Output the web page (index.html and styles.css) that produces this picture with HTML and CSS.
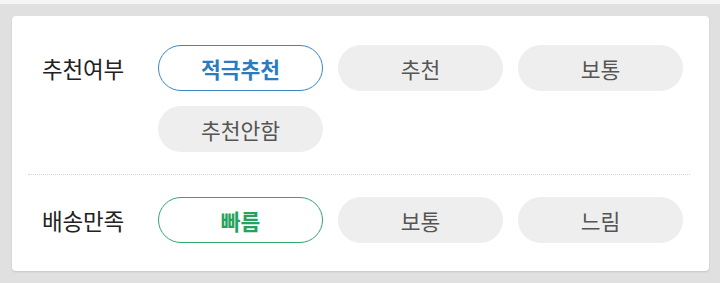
FILE: index.html
```html
<!DOCTYPE html>
<html lang="ko">
<head>
<meta charset="utf-8">
<link rel="stylesheet" href="styles.css">
</head>
<body>
<div class="topbar"></div>
<div class="page">
  <div class="card">
    <div class="section first">
      <div class="label">추천여부</div>
      <div class="options">
        <button class="opt active-blue">적극추천</button>
        <button class="opt">추천</button>
        <button class="opt">보통</button>
        <button class="opt">추천안함</button>
      </div>
    </div>
    <div class="section second">
      <div class="label">배송만족</div>
      <div class="options">
        <button class="opt active-green">빠름</button>
        <button class="opt">보통</button>
        <button class="opt">느림</button>
      </div>
    </div>
  </div>
</div>
</body>
</html>
```
FILE: styles.css
```css
html, body {
  margin: 0;
  padding: 0;
}
body {
  background: #e0e0e0;
  font-family: "Noto Sans CJK KR", "Noto Sans", sans-serif;
  width: 720px;
  height: 283px;
  overflow: hidden;
}
.topbar {
  height: 4px;
  background: #f5f5f5;
}
.page {
  padding: 12px 11px 0 12px;
}
.card {
  background: #fff;
  border-radius: 4px;
  box-shadow: 0 1px 2px rgba(0, 0, 0, 0.12);
  padding: 6px 19px 6px 16px;
}
.section {
  display: flex;
  align-items: flex-start;
  padding: 23px 0 22px 12px;
}
.section.first {
  border-bottom: 1px dotted #d6d6d6;
}
.section.second {
  padding-top: 22px;
}
.label {
  width: 116px;
  padding-left: 2px;
  flex: none;
  height: 46px;
  line-height: 46px;
  font-size: 22.5px;
  color: #222;
  letter-spacing: -0.2px;
}
.options {
  display: grid;
  grid-template-columns: repeat(3, 165px);
  column-gap: 15px;
  row-gap: 15px;
}
.opt {
  height: 46px;
  border-radius: 23px;
  border: none;
  background: #eeeeee;
  color: #555;
  font-family: inherit;
  font-size: 21.5px;
  padding: 0;
  margin: 0;
}
.active-blue {
  background: #fff;
  border: 1.5px solid #3a86c2;
  color: #2a7cc0;
  font-weight: 700;
}
.active-green {
  background: #fff;
  border: 1.5px solid #2fa86c;
  color: #23a35e;
  font-weight: 700;
}
```
